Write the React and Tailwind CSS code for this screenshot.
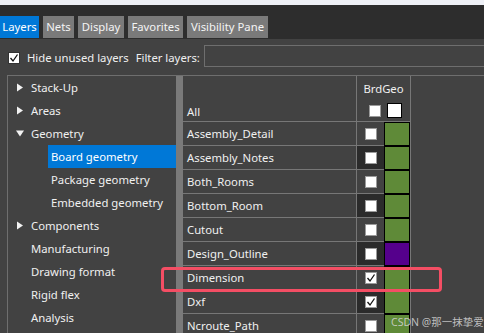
import React from "react";

const tabs = [
  { label: "Layers", w: "w-[39px]", active: true },
  { label: "Nets", w: "w-[31px]" },
  { label: "Display", w: "w-[46px]" },
  { label: "Favorites", w: "w-[55px]" },
  { label: "Visibility Pane", w: "w-[81px]" },
];

const tree = [
  { label: "Stack-Up", arrow: "right" },
  { label: "Areas", arrow: "right" },
  { label: "Geometry", arrow: "down" },
  { label: "Board geometry", child: true, selected: true },
  { label: "Package geometry", child: true },
  { label: "Embedded geometry", child: true },
  { label: "Components", arrow: "right" },
  { label: "Manufacturing" },
  { label: "Drawing format" },
  { label: "Rigid flex" },
  { label: "Analysis" },
];

const layers = [
  { name: "Assembly_Detail", color: "bg-[#5f8a38]" },
  { name: "Assembly_Notes", color: "bg-[#5f8a38]" },
  { name: "Both_Rooms", color: "bg-[#5f8a38]" },
  { name: "Bottom_Room", color: "bg-[#5f8a38]" },
  { name: "Cutout", color: "bg-[#5f8a38]" },
  { name: "Design_Outline", color: "bg-[#55008c]" },
  { name: "Dimension", color: "bg-[#5f8a38]", checked: true },
  { name: "Dxf", color: "bg-[#5f8a38]", checked: true },
  { name: "Ncroute_Path", color: "bg-[#5f8a38]" },
];

const Check = ({ checked, className = "" }) => (
  <div className={`w-[12px] h-[12px] bg-white border border-[#9a9a9a] flex items-center justify-center ${className}`}>
    {checked && (
      <svg width="10" height="10" viewBox="0 0 10 10">
        <polyline points="1.5,5 4,8 8.5,1.5" fill="none" stroke="#111" strokeWidth="1.3" />
      </svg>
    )}
  </div>
);

// tree expand arrows
const Arrow = ({ dir }) => (
  <svg width="8" height="9" viewBox="0 0 8 9" className="shrink-0">
    {dir === "right" ? (
      <polygon points="1,0.5 7,4.5 1,8.5" fill="#f2f2f2" />
    ) : (
      <polygon points="0,1.5 8,1.5 4,7.5" fill="#f2f2f2" />
    )}
  </svg>
);

export default function App() {
  return (
    <div className="relative w-[484px] h-[333px] overflow-hidden bg-[#424242] text-[11.3px] text-[#f0f0f0] font-['Noto_Sans',sans-serif] leading-none">
      <div className="h-[5px] bg-[#eef0f6]" />
      {/* tab strip */}
      <div className="h-[34px] bg-[#2d2d2d] flex items-end gap-[4px] pb-[1px]">
        {tabs.map((t) => (
          <div
            key={t.label}
            className={`${t.w} h-[22px] flex items-center justify-center whitespace-nowrap ${t.active ? "bg-[#0078d7] text-white" : "bg-[#7a7a7a] text-[#f4f4f4]"}`}
          >
            {t.label}
          </div>
        ))}
      </div>

      {/* filter row */}
      <div className="h-[37px] flex items-center">
        <Check checked className="ml-[8px] border-[#333]" />
        <span className="ml-[7px] whitespace-nowrap">Hide unused layers</span>
        <span className="ml-[7px] whitespace-nowrap">Filter layers:</span>
        <div className="ml-[4px] h-[22px] flex-1 border border-[#6e6e6e] -mr-[4px] -mt-[4px]" />
      </div>

      {/* body */}
      <div className="flex border-t border-[#6e6e6e] ml-[7px] -mt-[1px]">
        <div className="w-[169px] border-l border-[#6e6e6e] h-[260px]">
          {tree.map((n) => (
            <div key={n.label} className="h-[23px] flex items-center">
              {n.child ? (
                <div className={`ml-[40px] flex-1 h-full flex items-center pl-[3px] ${n.selected ? "bg-[#0078d7] text-white" : ""}`}>
                  {n.label}
                </div>
              ) : (
                <>
                  <div className="w-[8px] ml-[8px] flex">
                    {n.arrow && <Arrow dir={n.arrow} />}
                  </div>
                  <span className="ml-[7px]">{n.label}</span>
                </>
              )}
            </div>
          ))}
        </div>
        <div className="w-[7px] bg-[#7a7a7a]" />
        <div className="w-[228px] border-r border-[#777]">
          <div className="h-[46px] flex border-b border-[#777]">
            <div className="w-[174px] border-r border-[#777] flex items-end pl-[4px] pb-[4px]">All</div>
            <div className="flex-1 flex flex-col items-center pt-[7px]">
              <span>BrdGeo</span>
              <div className="flex items-center gap-[6px] mt-[9px] ml-[4px]">
                <Check />
                <div className="w-[15px] h-[15px] bg-white border border-black" />
              </div>
            </div>
          </div>
          {layers.map((l, i) => (
            <div key={l.name} className="h-[24px] flex border-b border-[#777]">
              <div className="w-[174px] border-r border-[#777] flex items-center pl-[4px]">{l.name}</div>
              <div className={`w-[27px] flex items-center justify-center ${i % 2 ? "bg-[#2b2b2b]" : ""}`}>
                <Check checked={l.checked} />
              </div>
              <div className={`w-[26px] h-[24px] border border-black ${l.color}`} />
            </div>
          ))}
        </div>
      </div>

      {/* annotation */}
      <div className="absolute left-[161px] top-[267px] w-[281px] h-[25px] border-[3px] border-[#f44e64] rounded-[4px]" />
      <div className="absolute left-[391px] top-[317px] text-[10.5px] text-[#d6d6d6]/85 font-['Noto_Sans','Noto_Sans_CJK_SC',sans-serif] whitespace-nowrap">
        CSDN @那一抹挚爱
      </div>
    </div>
  );
}
